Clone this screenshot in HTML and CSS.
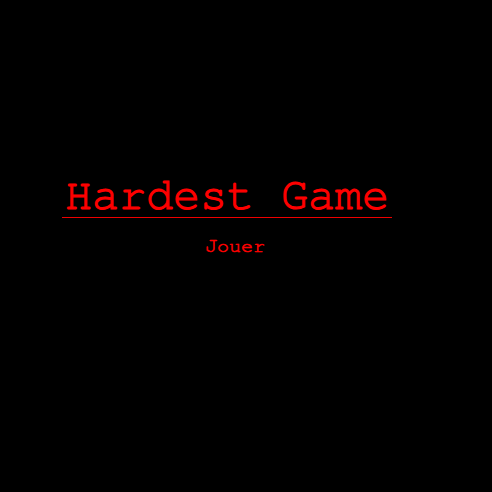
FILE: index.html
```html
<!DOCTYPE html>
<html lang="fr">
<head>
<meta charset="utf-8">
<title>Hardest Game</title>
<link rel="stylesheet" href="styles.css">
</head>
<body>
<main class="menu">
  <h1 class="title">Hardest Game</h1>
  <a class="play" href="#">Jouer</a>
</main>
</body>
</html>
```
FILE: styles.css
```css
html, body {
  margin: 0;
  padding: 0;
  background: #000;
}
body {
  width: 100vw;
  height: 100vh;
  overflow: hidden;
  font-family: "FreeMono", "Liberation Mono", monospace;
  color: #ff0000;
}
.menu {
  display: inline-flex;
  flex-direction: column;
  align-items: center;
  padding: 175px 0 0 62px;
}
.title {
  margin: 0;
  padding: 0 3px;
  font-size: 45px;
  font-weight: normal;
  line-height: 42px;
  color: #ff0000;
  -webkit-text-stroke: 1.1px #ff0000;
  border-bottom: 1px solid #ee0000;
}
.play {
  margin: 17px 0 0 16px;
  font-size: 20px;
  font-weight: normal;
  line-height: 23px;
  color: #ff0000;
  -webkit-text-stroke: 0.6px #ff0000;
  text-decoration: none;
}
```
